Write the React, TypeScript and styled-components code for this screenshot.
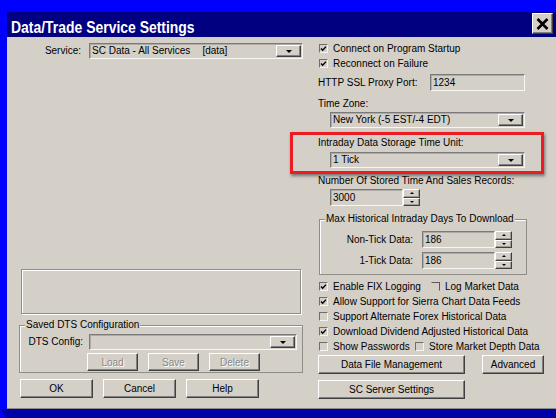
import styled, { createGlobalStyle } from "styled-components";

const GlobalStyle = createGlobalStyle`
  html, body {
    margin: 0;
    padding: 0;
  }
  body {
    background: #0000ff;
    font-family: "Liberation Sans", Arial, sans-serif;
    font-size: 10px;
    color: #000;
  }
`;

const Screen = styled.div`
  width: 556px;
  height: 418px;
  overflow: hidden;
  background: #0000ff;
  display: flex;
  flex-direction: column;
  padding-top: 12px;
  box-sizing: border-box;
`;

const Dialog = styled.div`
  margin-left: 7px;
  width: 549px;
  display: flex;
  flex-direction: column;
`;

const TitleBar = styled.div`
  height: 25px;
  background: #000080;
  display: flex;
  align-items: flex-start;
`;

const TitleText = styled.div`
  margin: 6px 0 0 4px;
  line-height: 19px;
  font-size: 17px;
  font-weight: bold;
  color: #fff;
  white-space: nowrap;
  transform: scaleX(0.82);
  transform-origin: left center;
`;

const CloseButton = styled.div`
  margin: 1px 3px 0 auto;
  width: 21px;
  height: 21px;
  box-sizing: border-box;
  background: #d4d0c8;
  border: 1px solid;
  border-color: #fff #404040 #404040 #fff;
  box-shadow: inset -1px -1px #808080;
  display: flex;
  align-items: center;
  justify-content: center;
`;

const Body = styled.div`
  height: 372px;
  box-sizing: border-box;
  background: #d4d0c8;
  border-bottom: 1px solid #8e8c86;
  display: grid;
  grid-template-columns: 284px 227px;
  column-gap: 15px;
  padding-left: 12px;
`;

const LeftColumn = styled.div`
  display: flex;
  flex-direction: column;
  padding: 6px 0 10px;
`;

const RightColumn = styled.div`
  display: flex;
  flex-direction: column;
  padding-top: 4px;
`;

const Spacer = styled.div`
  flex: 1;
`;

const BottomEdge = styled.div`
  height: 9px;
  background: #0000a8;
  clip-path: polygon(0 0, 100% 0, 100% 100%, 7px 100%);
`;

const Row = styled.div<{ $h: number; $mt?: number; $ml?: number }>`
  display: flex;
  align-items: center;
  height: ${(p) => p.$h}px;
  margin-top: ${(p) => p.$mt ?? 0}px;
  margin-left: ${(p) => p.$ml ?? 0}px;
`;

const Label = styled.span<{ $w?: number; $gap?: number; $right?: boolean }>`
  display: inline-block;
  width: ${(p) => (p.$w ? `${p.$w}px` : "auto")};
  margin-right: ${(p) => p.$gap ?? 0}px;
  text-align: ${(p) => (p.$right ? "right" : "left")};
  line-height: 12px;
  white-space: nowrap;
`;

const Caption = styled.div<{ $mt?: number }>`
  margin-top: ${(p) => p.$mt ?? 0}px;
  line-height: 12px;
  white-space: nowrap;
`;

const Field = styled.div<{ $w: number; $h: number; $ml?: number; $mt?: number }>`
  display: flex;
  align-items: stretch;
  width: ${(p) => p.$w}px;
  height: ${(p) => p.$h}px;
  margin-left: ${(p) => p.$ml ?? 0}px;
  margin-top: ${(p) => p.$mt ?? 0}px;
  box-sizing: border-box;
  background: #d4d0c8;
  border: 1px solid;
  border-color: #7a7a7a #f6f6f4 #f6f6f4 #7a7a7a;
  box-shadow: inset 1px 1px 0 #aeaba4;
  flex-shrink: 0;
`;

const FieldValue = styled.span`
  flex: 1;
  display: flex;
  align-items: center;
  padding-left: 2px;
  line-height: 12px;
  white-space: nowrap;
  overflow: hidden;
`;

const Tag = styled.span`
  margin-left: 12px;
`;

const DropButton = styled.div`
  width: 25px;
  margin: 1px;
  box-sizing: border-box;
  background: #d4d0c8;
  border: 1px solid;
  border-color: #fff #404040 #404040 #fff;
  box-shadow: inset -1px -1px #808080;
  display: flex;
  align-items: center;
  justify-content: center;
`;

const Arrow = styled.span<{ $size?: number; $up?: boolean }>`
  width: 0;
  height: 0;
  border-left: ${(p) => p.$size ?? 3}px solid transparent;
  border-right: ${(p) => p.$size ?? 3}px solid transparent;
  ${(p) =>
    p.$up
      ? `border-bottom: ${p.$size ?? 3}px solid #000;`
      : `border-top: ${p.$size ?? 3}px solid #000;`}
`;

const Spin = styled.div<{ $h: number }>`
  width: 17px;
  height: ${(p) => p.$h}px;
  display: flex;
  flex-direction: column;
  flex-shrink: 0;
`;

const SpinPart = styled.div`
  flex: 1;
  box-sizing: border-box;
  background: #d4d0c8;
  border: 1px solid;
  border-color: #fff #404040 #404040 #fff;
  box-shadow: inset -1px -1px #a09d97;
  display: flex;
  align-items: center;
  justify-content: center;
`;

const Button = styled.div<{ $w: number; $h?: number; $ml?: number; $mt?: number; $disabled?: boolean }>`
  width: ${(p) => p.$w}px;
  height: ${(p) => p.$h ?? 19}px;
  margin-left: ${(p) => p.$ml ?? 0}px;
  margin-top: ${(p) => p.$mt ?? 0}px;
  box-sizing: border-box;
  background: #d4d0c8;
  border: 1px solid;
  border-color: #fff #404040 #404040 #fff;
  box-shadow: inset -1px -1px #808080;
  display: flex;
  align-items: center;
  justify-content: center;
  white-space: nowrap;
  flex-shrink: 0;
  color: ${(p) => (p.$disabled ? "#8a8884" : "#000")};
  text-shadow: ${(p) => (p.$disabled ? "1px 1px 0 #fff" : "none")};
`;

const ButtonRow = styled.div<{ $mt?: number; $ml?: number; $gap?: number }>`
  display: flex;
  margin-top: ${(p) => p.$mt ?? 0}px;
  margin-left: ${(p) => p.$ml ?? 0}px;
  gap: ${(p) => p.$gap ?? 0}px;
`;

const CheckRow = styled.div<{ $mt?: number }>`
  display: flex;
  align-items: center;
  height: 15px;
  margin-top: ${(p) => p.$mt ?? 0}px;
`;

const CheckItem = styled.label<{ $w?: number }>`
  display: flex;
  align-items: center;
  width: ${(p) => (p.$w ? `${p.$w}px` : "auto")};
  white-space: nowrap;
  line-height: 12px;
`;

const Box = styled.span<{ $faint?: boolean }>`
  width: 9px;
  height: 9px;
  margin: 0 5px 0 1px;
  box-sizing: border-box;
  border: 1px solid;
  border-color: ${(p) =>
    p.$faint ? "#5a5a5a #5a5a5a transparent transparent" : "#6e6e6e #f4f4f2 #f4f4f2 #6e6e6e"};
  background: #d4d0c8;
  display: flex;
  align-items: center;
  justify-content: center;
  flex-shrink: 0;
`;

const Group = styled.fieldset<{ $w: number; $ml?: number; $mt?: number; $pad: string }>`
  margin: ${(p) => p.$mt ?? 0}px 0 0 ${(p) => p.$ml ?? 0}px;
  width: ${(p) => p.$w}px;
  min-width: 0;
  box-sizing: border-box;
  padding: ${(p) => p.$pad};
  border: 1px solid #8f8d88;
  box-shadow: inset 1px 1px 0 #fff;
`;

const GroupTitle = styled.legend`
  margin-left: 5px;
  padding: 0 1px;
  line-height: 12px;
  background: #d4d0c8;
  white-space: nowrap;
`;

const BlankPanel = styled.div`
  margin: 0 0 4px 2px;
  width: 281px;
  height: 46px;
  box-sizing: border-box;
  border: 1px solid;
  border-color: #8f8d88 #fff #fff #8f8d88;
  box-shadow: inset -1px -1px #8f8d88, inset 1px 1px #fff;
`;

const Highlight = styled.div`
  margin: 4px 0 0 -28px;
  width: 254px;
  box-sizing: border-box;
  border: 3px solid #ec1c24;
  box-shadow: 1px 2px 3px rgba(0, 0, 0, 0.45);
  padding: 2px 0 3px 25px;
`;

const Check = ({ on }: { on: boolean }) => (
  <Box>
    {on && (
      <svg width="7" height="7" viewBox="0 0 7 7">
        <path d="M1 3.4 L2.7 5.2 L6 1.6" fill="none" stroke="#000" strokeWidth="1.4" />
      </svg>
    )}
  </Box>
);

const Combo = ({ w, ml, mt, value }: { w: number; ml?: number; mt?: number; value: React.ReactNode }) => (
  <Field $w={w} $h={16} $ml={ml} $mt={mt}>
    <FieldValue>{value}</FieldValue>
    <DropButton>
      <Arrow />
    </DropButton>
  </Field>
);

const SpinField = ({ w, value }: { w: number; value: string }) => (
  <>
    <Field $w={w} $h={17}>
      <FieldValue>{value}</FieldValue>
    </Field>
    <Spin $h={17}>
      <SpinPart>
        <Arrow $size={2} $up />
      </SpinPart>
      <SpinPart>
        <Arrow $size={2} />
      </SpinPart>
    </Spin>
  </>
);

export default function App() {
  return (
    <>
      <GlobalStyle />
      <Screen>
        <Dialog>
          <TitleBar>
            <TitleText>Data/Trade Service Settings</TitleText>
            <CloseButton>
              <svg width="13" height="12" viewBox="0 0 13 12">
                <path d="M1.5 1 L11.5 11 M11.5 1 L1.5 11" stroke="#000" strokeWidth="2.6" />
              </svg>
            </CloseButton>
          </TitleBar>
          <Body>
            <LeftColumn>
              <Row $h={16}>
                <Label $w={62} $gap={8} $right>
                  Service:
                </Label>
                <Combo
                  w={214}
                  value={
                    <>
                      SC Data - All Services<Tag>[data]</Tag>
                    </>
                  }
                />
              </Row>
              <Spacer />
              <BlankPanel />
              <Group $w={284} $pad="3px 0 1px 0">
                <GroupTitle>Saved DTS Configuration</GroupTitle>
                <Row $h={16}>
                  <Label $w={63} $gap={6} $right>
                    DTS Config:
                  </Label>
                  <Combo w={208} value="" />
                </Row>
                <ButtonRow $mt={3} $ml={67} $gap={10}>
                  <Button $w={51} $h={18} $disabled>
                    Load
                  </Button>
                  <Button $w={51} $h={18} $disabled>
                    Save
                  </Button>
                  <Button $w={51} $h={18} $disabled>
                    Delete
                  </Button>
                </ButtonRow>
              </Group>
              <ButtonRow $mt={6} $ml={1} $gap={10}>
                <Button $w={73}>OK</Button>
                <Button $w={73}>Cancel</Button>
                <Button $w={73}>Help</Button>
              </ButtonRow>
            </LeftColumn>

            <RightColumn>
              <CheckRow>
                <CheckItem>
                  <Check on />
                  Connect on Program Startup
                </CheckItem>
              </CheckRow>
              <CheckRow>
                <CheckItem>
                  <Check on />
                  Reconnect on Failure
                </CheckItem>
              </CheckRow>
              <Row $h={17} $mt={3}>
                <Label $w={112}>HTTP SSL Proxy Port:</Label>
                <Field $w={95} $h={17}>
                  <FieldValue>1234</FieldValue>
                </Field>
              </Row>
              <Caption $mt={7}>Time Zone:</Caption>
              <Combo w={195} ml={12} mt={2} value="New York (-5 EST/-4 EDT)" />
              <Highlight>
                <Caption>Intraday Data Storage Time Unit:</Caption>
                <Combo w={195} ml={12} mt={3} value="1 Tick" />
              </Highlight>
              <Caption $mt={1}>Number Of Stored Time And Sales Records:</Caption>
              <Row $h={17} $mt={2} $ml={12}>
                <SpinField w={73} value="3000" />
              </Row>
              <Group $w={208} $ml={1} $mt={7} $pad="6px 0 5px 0">
                <GroupTitle>Max Historical Intraday Days To Download</GroupTitle>
                <Row $h={17}>
                  <Label $w={93} $gap={9} $right>
                    Non-Tick Data:
                  </Label>
                  <SpinField w={73} value="186" />
                </Row>
                <Row $h={17} $mt={4}>
                  <Label $w={93} $gap={9} $right>
                    1-Tick Data:
                  </Label>
                  <SpinField w={73} value="186" />
                </Row>
              </Group>
              <CheckRow $mt={4}>
                <CheckItem $w={112}>
                  <Check on />
                  Enable FIX Logging
                </CheckItem>
                <CheckItem>
                  <Box $faint />
                  Log Market Data
                </CheckItem>
              </CheckRow>
              <CheckRow>
                <CheckItem>
                  <Check on />
                  Allow Support for Sierra Chart Data Feeds
                </CheckItem>
              </CheckRow>
              <CheckRow>
                <CheckItem>
                  <Check on={false} />
                  Support Alternate Forex Historical Data
                </CheckItem>
              </CheckRow>
              <CheckRow>
                <CheckItem>
                  <Check on />
                  Download Dividend Adjusted Historical Data
                </CheckItem>
              </CheckRow>
              <CheckRow>
                <CheckItem $w={96}>
                  <Check on={false} />
                  Show Passwords
                </CheckItem>
                <CheckItem>
                  <Check on={false} />
                  Store Market Depth Data
                </CheckItem>
              </CheckRow>
              <ButtonRow $mt={1}>
                <Button $w={147}>Data File Management</Button>
                <Button $w={62} $ml={17}>
                  Advanced
                </Button>
              </ButtonRow>
              <Button $w={147} $mt={6}>
                SC Server Settings
              </Button>
            </RightColumn>
          </Body>
        </Dialog>
        <BottomEdge />
      </Screen>
    </>
  );
}
